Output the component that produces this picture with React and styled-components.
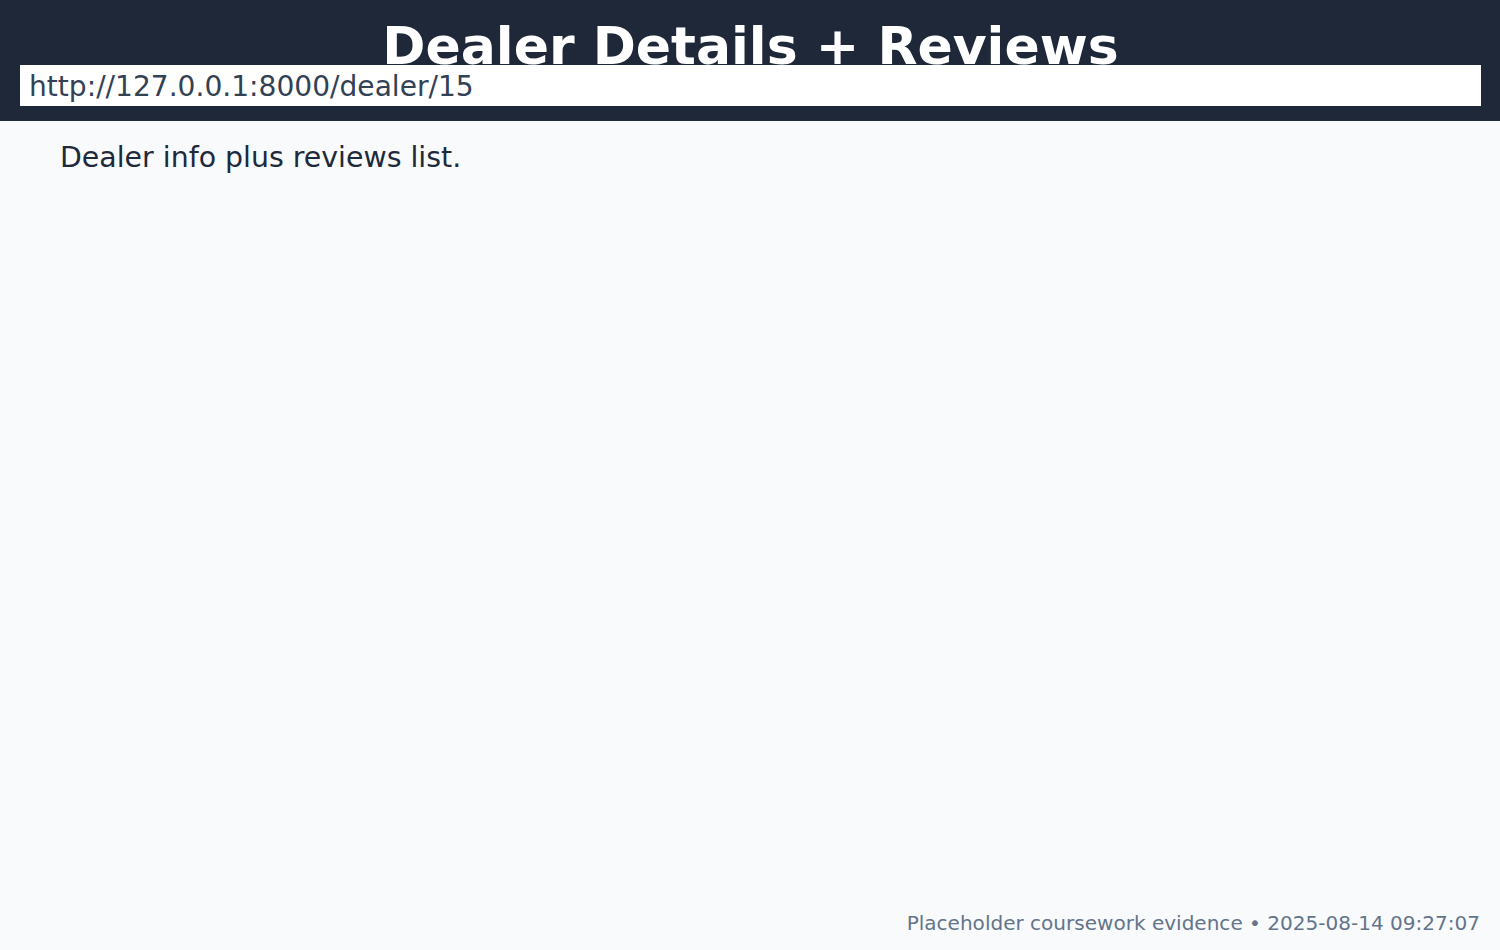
import React from "react";
import styled, { createGlobalStyle } from "styled-components";

const Global = createGlobalStyle`
  html, body { margin: 0; padding: 0; }
  body {
    background: #f8fafc;
    font-family: "DejaVu Sans", "Liberation Sans", sans-serif;
  }
`;

const Page = styled.div`
  min-height: 100vh;
  display: flex;
  flex-direction: column;
  background: #f8fafc;
`;

const Header = styled.header`
  background: #1f2839;
  padding: 20px 19px 15px 20px;
  display: flex;
  flex-direction: column;
`;

const Title = styled.h1`
  margin: 0 0 -7px;
  font-size: 52px;
  line-height: 52px;
  font-weight: 700;
  color: #ffffff;
  text-align: center;
  white-space: nowrap;
`;

const AddressBar = styled.div`
  position: relative;
  box-sizing: border-box;
  height: 41px;
  background: #ffffff;
  padding: 2px 9px 0;
  font-size: 28.1px;
  line-height: 39px;
  color: #334155;
  white-space: nowrap;
  overflow: hidden;
`;

const Main = styled.main`
  flex: 1;
  padding: 20px 60px 0;
`;

const Lead = styled.p`
  margin: 0;
  font-size: 28.4px;
  color: #1e293b;
`;

const Footer = styled.footer`
  padding: 0 20px 15px;
  text-align: right;
  font-size: 20.05px;
  color: #64748b;
`;

export default function App() {
  return (
    <Page>
      <Global />
      <Header>
        <Title>Dealer Details + Reviews</Title>
        <AddressBar>http://127.0.0.1:8000/dealer/15</AddressBar>
      </Header>
      <Main>
        <Lead>Dealer info plus reviews list.</Lead>
      </Main>
      <Footer>Placeholder coursework evidence • 2025-08-14 09:27:07</Footer>
    </Page>
  );
}
